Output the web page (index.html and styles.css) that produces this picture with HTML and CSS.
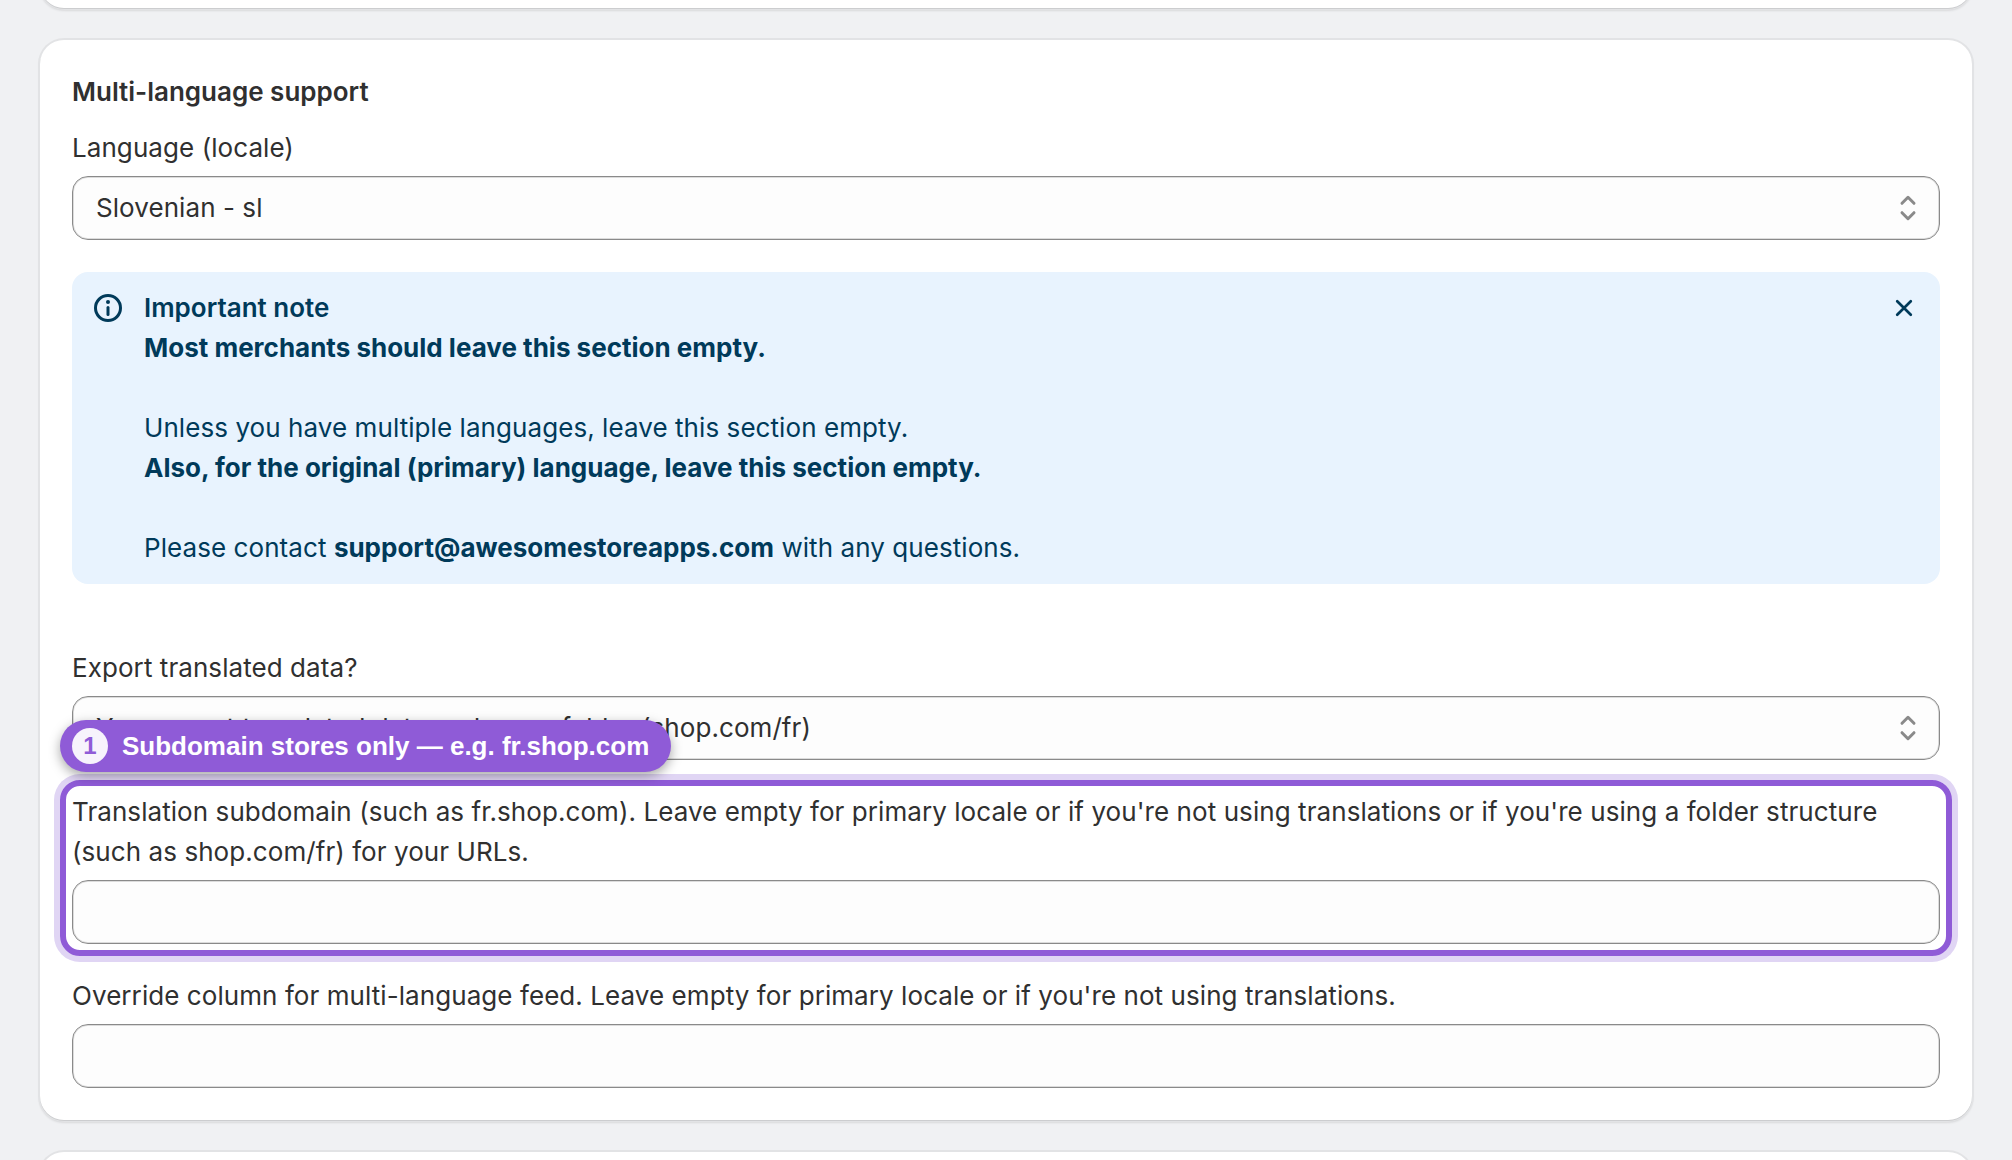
FILE: index.html
```html
<!DOCTYPE html>
<html lang="en">
<head>
  <meta charset="UTF-8" />
  <meta name="viewport" content="width=device-width, initial-scale=1" />
  <title>Multi-language support</title>
  <link rel="stylesheet" href="styles.css">
</head>
<body>
  <main class="page">
    <section class="card card-prev"></section>

    <section class="card">
      <h2>Multi-language support</h2>

      <div class="field">
        <div class="label">Language (locale)</div>
        <div class="control select">
          <span>Slovenian - sl</span>
          <svg class="select-icon" viewBox="0 0 40 40">
            <path d="M14 15.3l6-6 6 6M14 24.7l6 6 6-6" />
          </svg>
        </div>
      </div>

      <div class="banner">
        <svg class="info-icon" viewBox="0 0 40 40">
          <circle class="ring" cx="20" cy="20" r="12.5" />
          <circle cx="20" cy="14" r="2" />
          <path class="stem" d="M20 19.5v7" />
        </svg>
        <div class="banner-text">
          <h3>Important note</h3>
          <p><b>Most merchants should leave this section empty.</b></p>
          <br>
          <p>Unless you have multiple languages, leave this section empty.</p>
          <p><b>Also, for the original (primary) language, leave this section empty.</b></p>
          <br>
          <p>Please contact <b>support@awesomestoreapps.com</b> with any questions.</p>
        </div>
        <svg class="close-icon" viewBox="0 0 40 40">
          <path d="M13.2 13.2l13.6 13.6M26.8 13.2l-13.6 13.6" />
        </svg>
      </div>

      <div class="field">
        <div class="label">Export translated data?</div>
        <div class="control select">
          <span>Yes, export translated data and use a folder (shop.com/fr)</span>
          <svg class="select-icon" viewBox="0 0 40 40">
            <path d="M14 15.3l6-6 6 6M14 24.7l6 6 6-6" />
          </svg>
        </div>
      </div>

      <div class="field highlight">
        <div class="label">Translation subdomain (such as fr.shop.com). Leave empty for primary locale or if you're not using translations or if you're using a folder structure (such as shop.com/fr) for your URLs.</div>
        <div class="control"></div>
        <div class="callout">
          <span class="callout-number">1</span>
          <span>Subdomain stores only — e.g. fr.shop.com</span>
        </div>
      </div>

      <div class="field">
        <div class="label">Override column for multi-language feed. Leave empty for primary locale or if you're not using translations.</div>
        <div class="control"></div>
      </div>
    </section>

    <section class="card card-next"></section>
  </main>
</body>
</html>
```

FILE: styles.css
```css
* {
  box-sizing: border-box;
}
body {
  margin: 0;
  height: 1160px;
  overflow: hidden;
  background: #f0f1f3;
  color: #303030;
  font-family: Inter, sans-serif;
  font-size: 26px;
  letter-spacing: 0.07px;
  line-height: 40px;
}
h2, h3, p {
  margin: 0;
  font-size: 26px;
  line-height: 40px;
}
h2, h3 {
  font-weight: 600;
  letter-spacing: 0;
}
b {
  font-weight: 700;
  letter-spacing: 0;
}
.page {
  display: flex;
  flex-direction: column;
  gap: 32px;
  height: 1160px;
  padding: 0 40px;
  overflow: hidden;
}
.card {
  flex: none;
  padding: 32px;
  background: #fff;
  border-radius: 24px;
  box-shadow: 0 1px 0 0 #cccdcf, 0 0 0 2px #e2e3e5, 0 2px 3px 0 rgba(0, 0, 0, 0.2);
}
.card-prev {
  height: 64px;
  margin-top: -56px;
}
.card-next {
  height: 100px;
}
.field {
  margin-top: 32px;
}
h2 + .field {
  margin-top: 16px;
}
.control {
  height: 64px;
  margin-top: 8px;
  background: #fdfdfd;
  border: 1px solid #8a8a8a;
  border-radius: 16px;
  box-shadow: inset 0 0 0 1px #dcdcdc;
}
.select {
  display: flex;
  align-items: center;
  justify-content: space-between;
  padding: 0 11px 0 23px;
}
.select-icon {
  width: 40px;
  height: 40px;
  fill: none;
  stroke: #8a8a8a;
  stroke-width: 3;
  stroke-linecap: round;
  stroke-linejoin: round;
}

/* info banner */
.banner {
  display: flex;
  gap: 16px;
  margin: 32px 0 64px;
  padding: 16px;
  background: #e8f3fe;
  border-radius: 16px;
  color: #003a5a;
}
.info-icon, .close-icon {
  flex: none;
  width: 40px;
  height: 40px;
  fill: #003a5a;
}
.ring, .stem, .close-icon path {
  fill: none;
  stroke: #003a5a;
  stroke-width: 3;
  stroke-linecap: round;
}
.close-icon path {
  stroke-width: 2.7;
}
.banner-text {
  flex: 1;
}

/* highlighted field with callout */
.highlight {
  position: relative;
}
.highlight::before {
  content: "";
  position: absolute;
  inset: -12px;
  border: 6px solid #8f5bd7;
  border-radius: 20px;
  box-shadow: 0 0 0 6px #e0d5f4;
}
.callout {
  position: absolute;
  left: -12px;
  top: -72px;
  display: flex;
  align-items: center;
  gap: 14px;
  height: 52px;
  padding: 0 22px 0 12px;
  background: #8f5bd7;
  border-radius: 26px;
  box-shadow: 0 4px 12px rgba(0, 0, 0, 0.35);
  color: #fff;
  font: bold 26px/52px "Liberation Sans", sans-serif;
  letter-spacing: 0;
  white-space: nowrap;
}
.callout-number {
  width: 36px;
  height: 36px;
  border-radius: 50%;
  background: #f7f3fc;
  color: #8f5bd7;
  font-size: 24px;
  line-height: 36px;
  text-align: center;
}
```
